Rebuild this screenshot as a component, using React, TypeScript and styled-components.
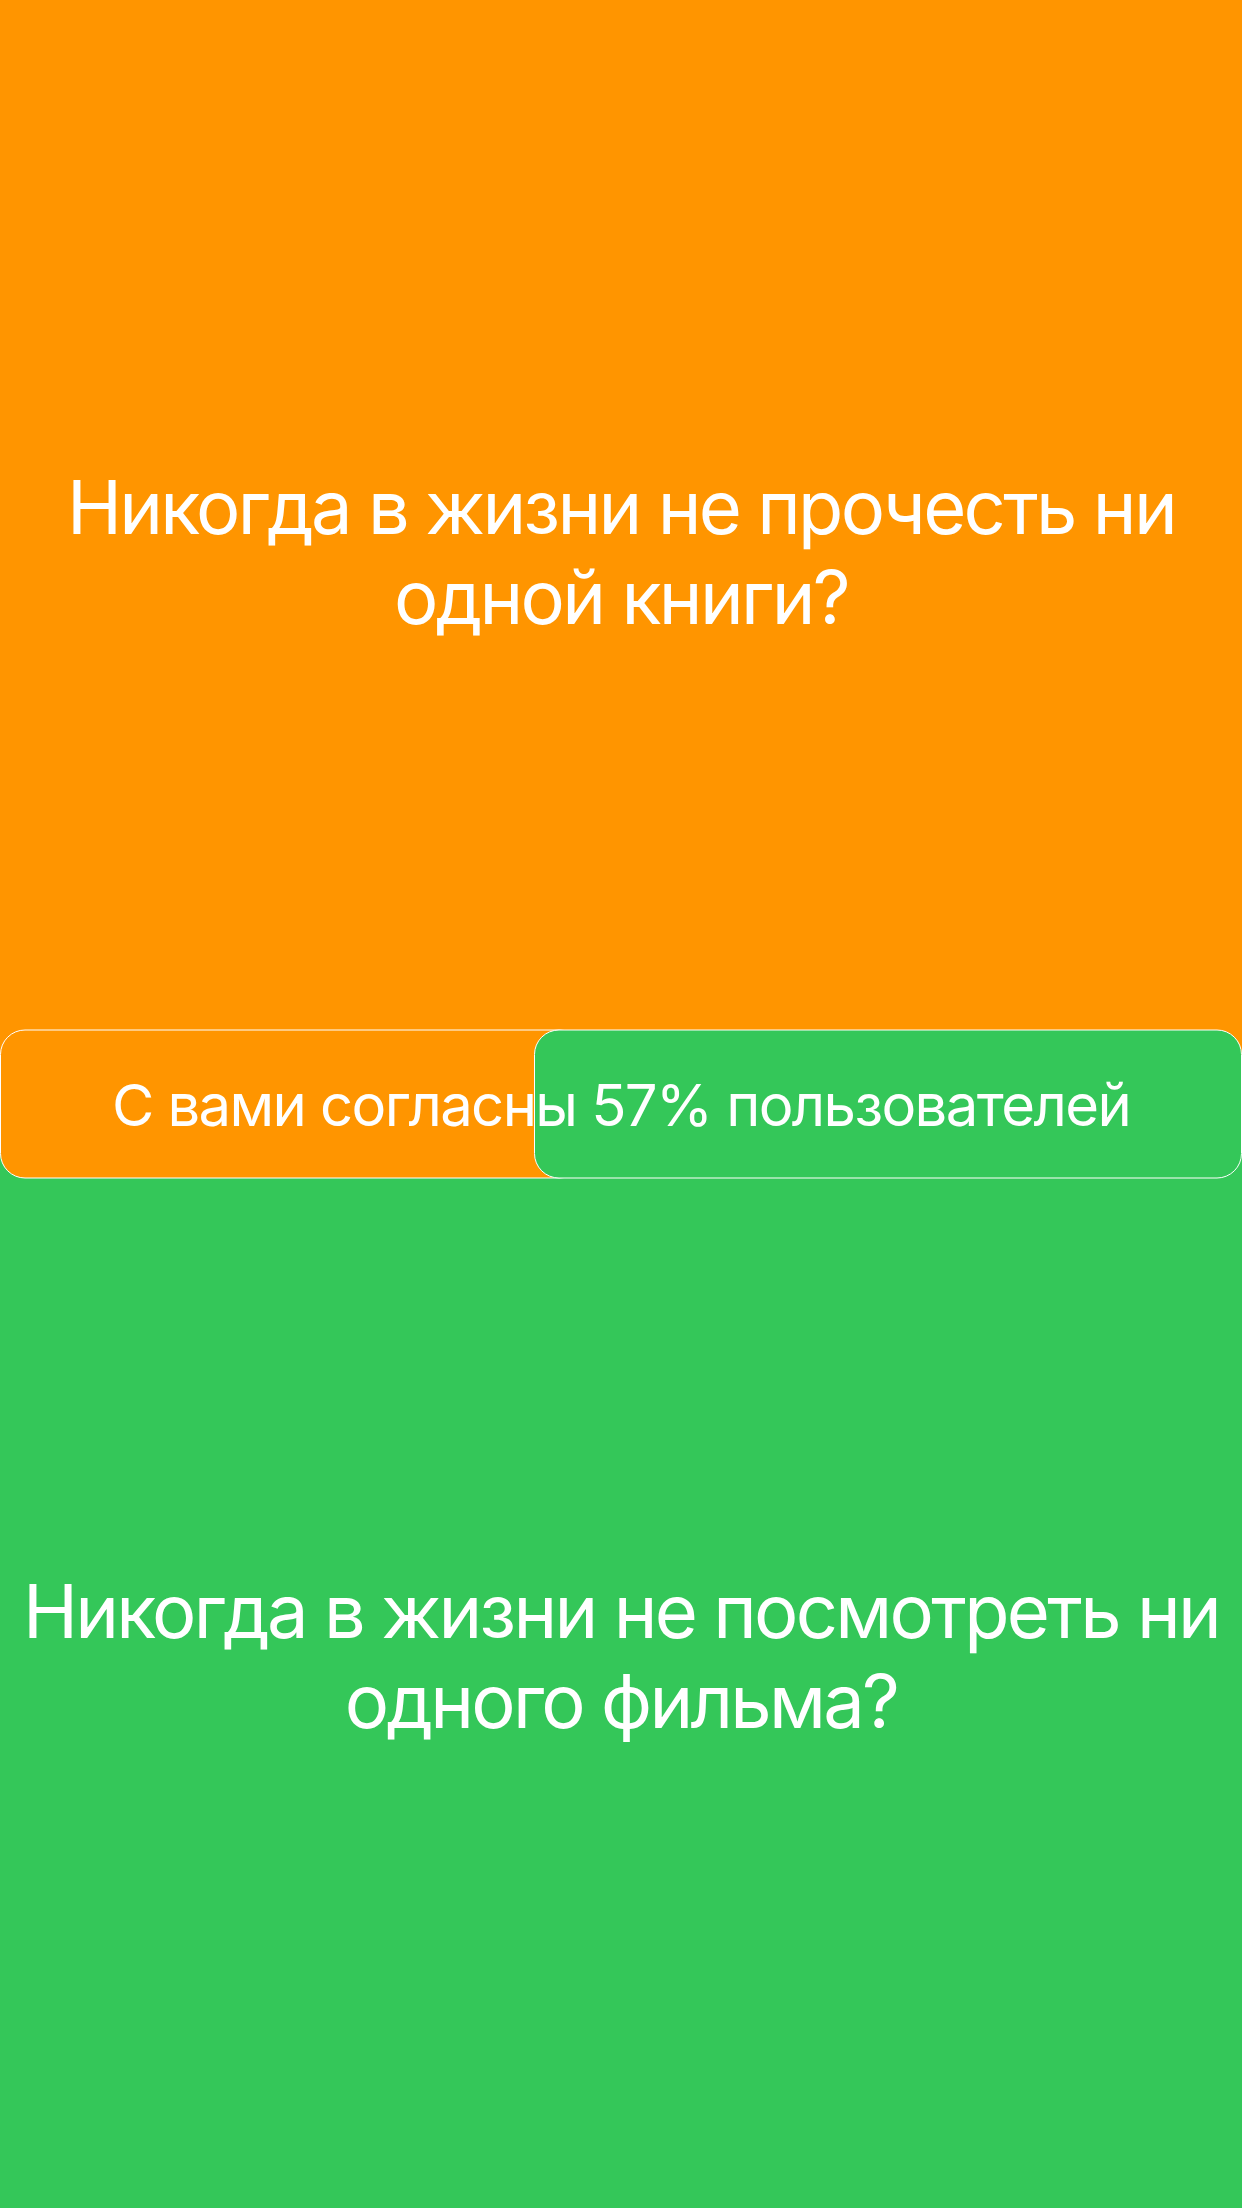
import React from "react";
import styled, { createGlobalStyle } from "styled-components";

const colors = {
  orange: "#FF9500",
  green: "#34C759",
  white: "#FFFFFF",
};

const GlobalStyle = createGlobalStyle`
  html, body {
    margin: 0;
    padding: 0;
  }

  body {
    font-family: 'Inter', 'Noto Sans', sans-serif;
    -webkit-font-smoothing: antialiased;
  }
`;

const Page = styled.div`
  position: relative;

  width: 100vw;
  height: 100vh;

  display: grid;
  grid-template-rows: 1fr 1fr;
`;

const Panel = styled.div<{ $color: string }>`
  display: flex;
  align-items: center;
  justify-content: center;

  padding-left: 16px;
  padding-right: 16px;

  background-color: ${(p) => p.$color};
`;

const Question = styled.div`
  color: ${colors.white};

  font-size: 74px;
  font-weight: 400;
  line-height: 90px;
  text-align: center;
  letter-spacing: -2.7px;
`;

const ResultBar = styled.div`
  position: absolute;
  top: 50%;
  left: 0;
  right: 0;
  transform: translateY(-50%);

  height: 149px;

  display: grid;
  grid-template-columns: 100%;
  grid-template-rows: 100%;
`;

const Pill = styled.div<{ $color: string; $side: "start" | "end" }>`
  grid-area: 1 / 1;
  justify-self: ${(p) => p.$side};

  box-sizing: border-box;
  height: 100%;

  border: 1px solid ${colors.white};
  border-radius: 25px;

  background-color: ${(p) => p.$color};
`;

const ResultLabel = styled.div`
  grid-area: 1 / 1;
  place-self: center;
  z-index: 1;

  color: ${colors.white};

  font-size: 58px;
  font-weight: 400;
  letter-spacing: -1.6px;
  white-space: nowrap;
`;

function App() {
  const agreed = 57;

  return (
    <>
      <GlobalStyle />
      <Page>
        <Panel $color={colors.orange}>
          <Question>Никогда в жизни не прочесть ни одной книги?</Question>
        </Panel>

        <Panel $color={colors.green}>
          <Question>Никогда в жизни не посмотреть ни одного фильма?</Question>
        </Panel>

        <ResultBar>
          <Pill $color={colors.orange} $side="start" style={{ width: `calc(${100 - agreed}% + 50px)` }} />
          <Pill $color={colors.green} $side="end" style={{ width: `${agreed}%` }} />
          <ResultLabel>С вами согласны {agreed}% пользователей</ResultLabel>
        </ResultBar>
      </Page>
    </>
  );
}

export default App;
